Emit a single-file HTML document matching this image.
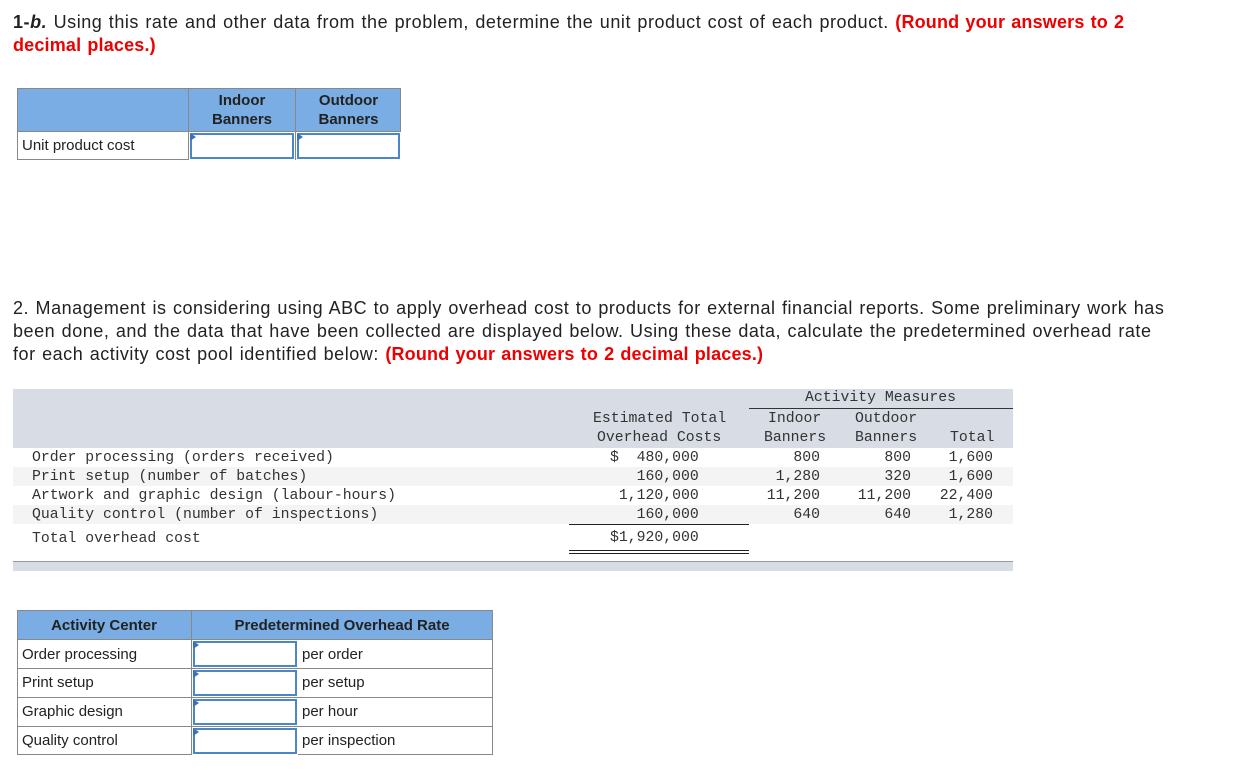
<!DOCTYPE html>
<html><head><meta charset="utf-8"><style>
body{margin:0;width:1259px;height:771px;background:#fff;position:relative;font-family:"Liberation Sans",Arial,sans-serif;color:#222;overflow:hidden}
.p{position:absolute;left:13px;font-size:18px;line-height:23px;white-space:nowrap;color:#222;letter-spacing:0.03em;word-spacing:0.05em}
.r{color:#e00;font-weight:bold;letter-spacing:0.01em}
.a{position:absolute}
.t{position:absolute;font-size:15px;white-space:nowrap}
.m{position:absolute;font-family:"Liberation Mono",monospace;font-size:14.8px;white-space:pre;color:#333}
.inp{position:absolute;background:#fff;border:2px solid #4a86c8;box-sizing:border-box;outline:1px solid #fff}
.inp:before{content:"";position:absolute;left:-2px;top:-2px;border-left:6px solid #3a72b8;border-top:4px solid transparent;border-bottom:4px solid transparent}
</style></head><body>
<div class="p" style="top:11px"><b>1-<i>b.</i></b> Using this rate and other data from the problem, determine the unit product cost of each product. <span class="r">(Round your answers to 2</span></div>
<div class="p" style="top:34px"><span class="r">decimal places.)</span></div>

<div class="a" style="left:17px;top:88px;width:384px;height:72px;border:1px solid #888;box-sizing:border-box;background:#fff"></div>
<div class="a" style="left:18px;top:89px;width:382px;height:42px;background:#79ade3"></div>
<div class="a" style="left:17px;top:131px;width:384px;height:1px;background:#888"></div>
<div class="a" style="left:188px;top:88px;width:1px;height:72px;background:#888"></div>
<div class="a" style="left:295px;top:88px;width:1px;height:72px;background:#888"></div>
<div class="t" style="left:189px;width:106px;top:91px;text-align:center;font-weight:bold;line-height:19px;color:#222">Indoor<br>Banners</div>
<div class="t" style="left:296px;width:105px;top:91px;text-align:center;font-weight:bold;line-height:19px;color:#222">Outdoor<br>Banners</div>
<div class="t" style="left:22px;top:137px;color:#222">Unit product cost</div>
<div class="inp" style="left:190px;top:133px;width:104px;height:26px"></div>
<div class="inp" style="left:297px;top:133px;width:103px;height:26px"></div>

<div class="p" style="top:297px">2. Management is considering using ABC to apply overhead cost to products for external financial reports. Some preliminary work has</div>
<div class="p" style="top:320px">been done, and the data that have been collected are displayed below. Using these data, calculate the predetermined overhead rate</div>
<div class="p" style="top:343px">for each activity cost pool identified below: <span class="r">(Round your answers to 2 decimal places.)</span></div>

<div class="a" style="left:13px;top:389px;width:1000px;height:59px;background:#d8dce5"></div>
<div class="a" style="left:13px;top:467px;width:1000px;height:19px;background:#f4f4f4"></div>
<div class="a" style="left:13px;top:505px;width:1000px;height:19px;background:#f4f4f4"></div>
<div class="a" style="left:13px;top:561px;width:1000px;height:9px;background:#d8dce5;border-top:1px solid #999"></div>
<div class="a" style="left:749px;top:408px;width:264px;height:1px;background:#333"></div>
<div class="a" style="left:569px;top:524px;width:180px;height:1px;background:#222"></div>
<div class="a" style="left:569px;top:550px;width:180px;height:1px;background:#222"></div>
<div class="a" style="left:569px;top:553px;width:180px;height:1px;background:#222"></div>
<div class="m" style="left:805px;top:390px">Activity Measures</div>
<div class="m" style="left:593px;top:411px">Estimated Total</div>
<div class="m" style="left:597px;top:430px">Overhead Costs</div>
<div class="m" style="left:768px;top:411px">Indoor</div>
<div class="m" style="left:764px;top:430px">Banners</div>
<div class="m" style="left:855px;top:411px">Outdoor</div>
<div class="m" style="left:855px;top:430px">Banners</div>
<div class="m" style="left:950px;top:430px">Total</div>
<div class="m" style="left:32px;top:449px;line-height:19px">Order processing (orders received)
Print setup (number of batches)
Artwork and graphic design (labour-hours)
Quality control (number of inspections)</div>
<div class="m" style="left:32px;top:531px">Total overhead cost</div>
<div class="m" style="left:610px;top:449px;line-height:19px">$  480,000
   160,000
 1,120,000
   160,000</div>
<div class="m" style="left:610px;top:530px">$1,920,000</div>
<div class="m" style="left:760px;top:449px;line-height:19px;text-align:right;width:60px">800
1,280
11,200
640</div>
<div class="m" style="left:850px;top:449px;line-height:19px;text-align:right;width:61px">800
320
11,200
640</div>
<div class="m" style="left:930px;top:449px;line-height:19px;text-align:right;width:63px">1,600
1,600
22,400
1,280</div>

<div class="a" style="left:17px;top:610px;width:476px;height:145px;border:1px solid #888;box-sizing:border-box"></div>
<div class="a" style="left:18px;top:611px;width:474px;height:28px;background:#79ade3"></div>
<div class="a" style="left:17px;top:639px;width:476px;height:1px;background:#888"></div>
<div class="a" style="left:17px;top:668px;width:476px;height:1px;background:#888"></div>
<div class="a" style="left:17px;top:697px;width:476px;height:1px;background:#888"></div>
<div class="a" style="left:17px;top:726px;width:476px;height:1px;background:#888"></div>
<div class="a" style="left:191px;top:610px;width:1px;height:145px;background:#888"></div>
<div class="t" style="left:17px;width:174px;top:617px;text-align:center;font-weight:bold;color:#222">Activity Center</div>
<div class="t" style="left:192px;width:300px;top:617px;text-align:center;font-weight:bold;color:#222">Predetermined Overhead Rate</div>
<div class="t" style="left:22px;top:646px">Order processing</div>
<div class="t" style="left:22px;top:674px">Print setup</div>
<div class="t" style="left:22px;top:703px">Graphic design</div>
<div class="t" style="left:22px;top:732px">Quality control</div>
<div class="inp" style="left:193px;top:641px;width:104px;height:26px"></div>
<div class="inp" style="left:193px;top:670px;width:104px;height:26px"></div>
<div class="inp" style="left:193px;top:699px;width:104px;height:26px"></div>
<div class="inp" style="left:193px;top:728px;width:104px;height:26px"></div>
<div class="t" style="left:302px;top:646px">per order</div>
<div class="t" style="left:302px;top:674px">per setup</div>
<div class="t" style="left:302px;top:703px">per hour</div>
<div class="t" style="left:302px;top:732px">per inspection</div>
</body></html>
